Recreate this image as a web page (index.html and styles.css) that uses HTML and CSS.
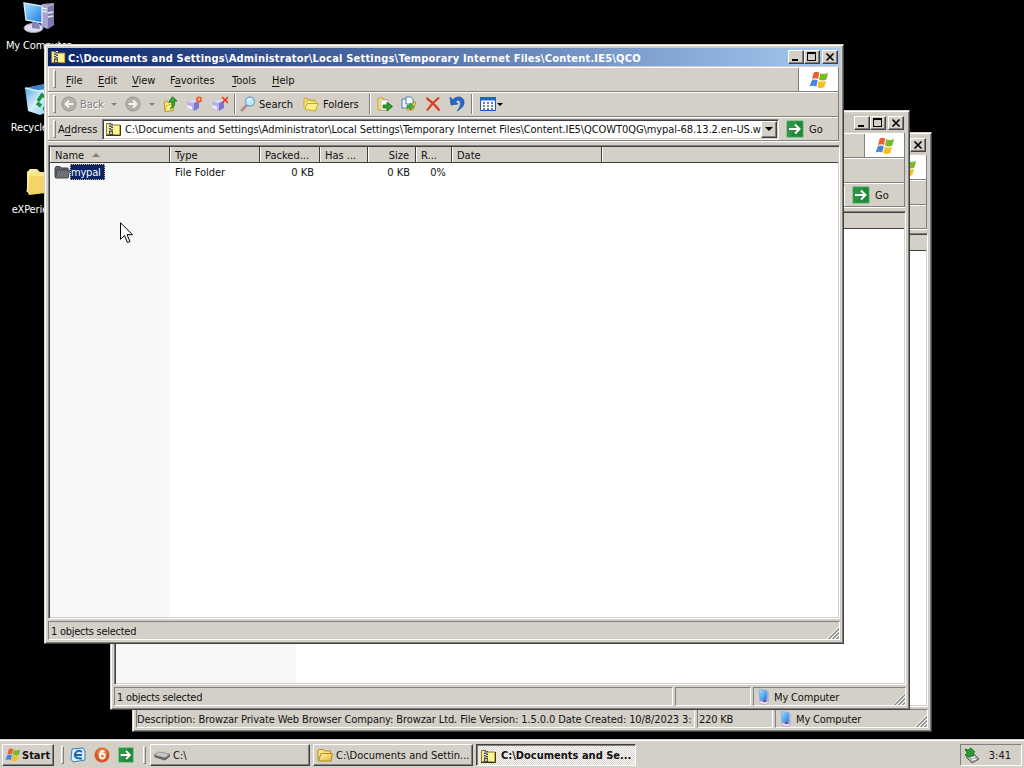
FILE: index.html
```
<!DOCTYPE html>
<html lang="en">
<head>
	<meta charset="UTF-8">
	<title>Desktop</title>
	<link rel="stylesheet" href="styles.css">
</head>
<body>
	<svg class="defs">
		<defs>
			<linearGradient id="gScreen" x1="0" y1="0" x2="1" y2="1">
				<stop offset="0" stop-color="#a8e4ff"/><stop offset="1" stop-color="#1c78e0"/>
			</linearGradient>
			<linearGradient id="gFolder" x1="0" y1="0" x2="1" y2="1">
				<stop offset="0" stop-color="#fff6a8"/><stop offset="1" stop-color="#e4b83c"/>
			</linearGradient>
			<linearGradient id="gBin" x1="0" y1="0" x2="1" y2="1">
				<stop offset="0" stop-color="#4a9ee0"/><stop offset="0.5" stop-color="#d4f0fc"/><stop offset="1" stop-color="#7cc0ec"/>
			</linearGradient>
			<symbol id="zip" viewBox="0 0 16 16">
				<path d="M1.500 13.500v-11h4l1.500 1.500h8v10z" fill="#f4ec90" stroke="#8c7c28"/>
				<path d="M8 5h6v8H8z" fill="#fcf48c"/>
				<path d="M15.500 4v10.500H1" fill="none" stroke="#3c3410"/>
				<path d="M4 2h4v12H4z" fill="#e8e8d8"/>
				<path d="M5 2v12M7 3v11" stroke="#222" stroke-width="1.500" stroke-dasharray="1.500 1" fill="none"/>
				<path d="M4.500 10.500h3v3h-3z" fill="#ccc" stroke="#333" stroke-width=".8"/>
			</symbol>
			<symbol id="folder" viewBox="0 0 16 16">
				<path d="M1 13.500V4l1-1.500h4L7.500 4H13.500v4" fill="#f8e888" stroke="#b48a18"/>
				<path d="M4 6.500h11.500l-1.500 7.500H1.500z" fill="url(#gFolder)" stroke="#b48a18"/>
			</symbol>
			<symbol id="flag" viewBox="0 0 20 18">
				<path d="M4.500 2Q7-.2 10.300 1.800L9 8Q6 6.400 3 8.400z" fill="#e8602c"/>
				<path d="M11.300 2.300Q14.500 4 19.200 2L17.400 8.600Q13.500 10.500 10 8.500z" fill="#7ab82c"/>
				<path d="M2.700 9.400Q5.800 7.500 8.700 9.200L7.300 15.400Q4 13.800.6 15.600z" fill="#4884dc"/>
				<path d="M9.700 9.700Q13 11.500 17 9.700L15.400 16Q11.500 18.300 8.300 16z" fill="#f4c020"/>
			</symbol>
			<symbol id="go" viewBox="0 0 18 18">
				<rect x=".5" y=".5" width="17" height="17" rx="1.500" fill="#2c9444" stroke="#8cc890"/>
				<path d="M11 2h5v14H5z" fill="#14782c" opacity=".45"/>
				<path d="M3 9h10M9 4.500L13.500 9 9 13.500" fill="none" stroke="#fff" stroke-width="2"/>
			</symbol>
			<symbol id="pc" viewBox="0 0 16 16">
				<path d="M10 3h3v9l-3 2z" fill="#b8b4d8"/>
				<path d="M3 0.500l8 1v9l-7 1z" fill="url(#gScreen)" stroke="#78a8d8" stroke-width=".7"/>
				<ellipse cx="8" cy="13.500" rx="4.500" ry="2" fill="#e4dcec" stroke="#9a90b0" stroke-width=".6"/>
				<path d="M7 11l3-.5.500 2.500h-4z" fill="#6050a0"/>
			</symbol>
			<symbol id="send" viewBox="0 0 16 16">
				<path d="M0 6l6-2.500 6 1.500v7l-5 3-6-3z" fill="#b4b0e8"/>
				<path d="M1 5.500l6-2 5 1.500-6 2z" fill="#dcdcf8"/>
				<path d="M7 7l5-2v7l-5 3z" fill="#7c78cc"/>
				<path d="M0 9l5 1.500v3L1 12z" fill="#f4f0ff"/>
			</symbol>
			<symbol id="grip" viewBox="0 0 13 13">
				<path d="M1 13L13 1M5 13l8-8M9 13l4-4" stroke="#fff" fill="none"/>
				<path d="M2 13L13 2M3 13L13 3M6 13l7-7M7 13l6-6M10 13l3-3M11 13l2-2" stroke="#808080" stroke-width=".8" fill="none"/>
			</symbol>
			<symbol id="min" viewBox="0 0 12 10"><path d="M2 7h6v2H2z"/></symbol>
			<symbol id="max" viewBox="0 0 12 10"><path d="M1 0h9v9H1zM2 2v6h7V2z" fill-rule="evenodd"/></symbol>
			<symbol id="close" viewBox="0 0 12 10"><path d="M2.500 1.500l7 7M9.500 1.500l-7 7" fill="none" stroke="#000" stroke-width="1.700"/></symbol>
		</defs>
	</svg>

	<div class="desktop">
		<ul class="icons">
			<li>
				<svg viewBox="0 0 32 32">
					<path d="M19 2l12-1v22l-7 4-6-3z" fill="#a8a4cc"/><path d="M25 5l6-2v20l-6 4z" fill="#7c78b0"/>
					<path d="M19 6l5 1M19 9l5 1M25 11l5-1M25 15l5-1" stroke="#e8e8fc" stroke-width="1.500"/>
					<ellipse cx="10.500" cy="26" rx="9.500" ry="4.500" fill="#dcdcf0" stroke="#9c9cc0"/><path d="M9 20l7 1 1 6-8-1z" fill="#8884b4"/>
					<path d="M1 1l18 3v17L3 18z" fill="url(#gScreen)" stroke="#d8e8f8" stroke-width="1.400"/>
				</svg>
				<span>My Computer</span>
			</li>
			<li>
				<svg viewBox="0 0 32 32">
					<path d="M2 4l20-4 8 5-3 22-10 4-12-4z" fill="url(#gBin)"/><path d="M2 4l13 3 15-2-8-5z" fill="#3c84cc"/>
					<path d="M2 4l13 3 15-2" fill="none" stroke="#d8f4ff" stroke-width="1.500"/>
					<path d="M15 17l4-6 5 3M25 17l1 7-6 1M18 22l-4-3" fill="none" stroke="#189438" stroke-width="3.500"/>
				</svg>
				<span>Recycle Bin</span>
			</li>
			<li>
				<svg viewBox="0 0 32 32">
					<path d="M4 25V6l3-3h7l3 3h14v20L6 29z" fill="url(#gFolder)"/><path d="M6 8l25 1v18L4 26z" fill="#f4d468"/><path d="M4 26l2-17h25" fill="none" stroke="#fff4b0"/>
				</svg>
				<span>eXPerience</span>
			</li>
		</ul>

		<div class="window w3">
			<div class="title">
				<span class="caption"></span>
				<span class="btn"><svg><use href="#min"/></svg></span><span class="btn"><svg><use href="#max"/></svg></span><span class="btn x"><svg><use href="#close"/></svg></span>
			</div>
			<div class="bars">
				<div class="menu"><span class="fill"></span><div class="brand"><svg><use href="#flag"/></svg></div></div>
				<div class="tools"></div>
				<div class="address"></div>
			</div>
			<div class="list"><div class="head"></div></div>
			<div class="status">
				<span class="desc">Description: Browzar Private Web Browser Company: Browzar Ltd. File Version: 1.5.0.0 Date Created: 10/8/2023 3:</span>
				<span class="size">220 KB</span>
				<span class="zone"><svg><use href="#pc"/></svg><b>My Computer</b></span>
				<svg class="grip"><use href="#grip"/></svg>
			</div>
		</div>

		<div class="window w2">
			<div class="title">
				<span class="caption"></span>
				<span class="btn"><svg><use href="#min"/></svg></span><span class="btn"><svg><use href="#max"/></svg></span><span class="btn x"><svg><use href="#close"/></svg></span>
			</div>
			<div class="bars">
				<div class="menu"><span class="fill"></span><div class="brand"><svg><use href="#flag"/></svg></div></div>
				<div class="tools"></div>
				<div class="address">
					<div class="combo"></div>
					<div class="go"><svg><use href="#go"/></svg>Go</div>
				</div>
			</div>
			<div class="list"><div class="head"></div><div class="body"><div class="sorted"></div></div></div>
			<div class="status">
				<span class="desc sel">1 objects selected</span>
				<span class="size"></span>
				<span class="zone"><svg><use href="#pc"/></svg><b>My Computer</b></span>
				<svg class="grip"><use href="#grip"/></svg>
			</div>
		</div>

		<div class="window w1">
			<div class="title active">
				<svg class="ico"><use href="#zip"/></svg>
				<span class="caption">C:\Documents and Settings\Administrator\Local Settings\Temporary Internet Files\Content.IE5\QCO</span>
				<span class="btn"><svg><use href="#min"/></svg></span><span class="btn"><svg><use href="#max"/></svg></span><span class="btn x"><svg><use href="#close"/></svg></span>
			</div>
			<div class="bars">
				<div class="menu">
					<i class="handle"></i>
					<span class="m-file"><u>F</u>ile</span>
					<span class="m-edit"><u>E</u>dit</span>
					<span class="m-view"><u>V</u>iew</span>
					<span class="m-fav">F<u>a</u>vorites</span>
					<span class="m-tools"><u>T</u>ools</span>
					<span class="fill"><u>H</u>elp</span>
					<div class="brand"><svg><use href="#flag"/></svg></div>
				</div>
				<div class="tools">
					<i class="handle"></i>
					<div class="back off">
						<svg viewBox="0 0 16 16"><circle cx="8" cy="8" r="7" fill="#b4b0a8" stroke="#98948c"/><path d="M12.500 8H5M8 4.500L4.500 8 8 11.500" fill="none" stroke="#f4f2ee" stroke-width="2"/></svg>
						<span>Back</span><i class="drop"></i>
					</div>
					<div class="fwd off">
						<svg viewBox="0 0 16 16"><circle cx="8" cy="8" r="7" fill="#b4b0a8" stroke="#98948c"/><path d="M3.500 8H11M8 4.500L11.500 8 8 11.500" fill="none" stroke="#f4f2ee" stroke-width="2"/></svg>
						<i class="drop"></i>
					</div>
					<svg class="up" viewBox="0 0 16 16"><path d="M3 15.500L2 6l3.500-1 1 1.500 4-1 1 9z" fill="#f4e478" stroke="#bc981c"/><path d="M3 15.500l2-6 7.500-2-1.500 6.500z" fill="#fcf4a0" stroke="#bc981c" stroke-width=".7"/><path d="M8 13q3-2 2-7H7L10.500.8 15 5H12.500q1 6-4.500 8z" fill="#34b02c" stroke="#146c14" stroke-width=".8"/></svg>
					<svg class="mapd" viewBox="0 0 16 16"><use href="#send"/><circle cx="12" cy="3.500" r="2.200" fill="#f8b870" stroke="#e8542c" stroke-width="1.500"/></svg>
					<svg class="unmap" viewBox="0 0 16 16"><use href="#send"/><path d="M10 1l6 6M16 1l-6 6" stroke="#e83c24" stroke-width="1.700"/></svg>
					<i class="sep s1"></i>
					<svg class="find" viewBox="0 0 16 16"><path d="M1 15l6-6" stroke="#b08890" stroke-width="2.500"/><circle cx="10" cy="5.500" r="4.500" fill="#bcecfc" stroke="#78a8c4" stroke-width="1.300"/><path d="M7.500 5q1-2.500 3.500-2" stroke="#fff" fill="none" stroke-width="1.300"/></svg>
					<span class="t-search">Search</span>
					<svg class="dirs" viewBox="0 0 16 16"><path d="M1 12V2.500h4l1 1.500h5.500V6" fill="#f8e87c" stroke="#c8a830"/><path d="M3.500 6V4.500L7 4l1 1h5v2" fill="#fcf4a0" stroke="#c8a830"/><path d="M4 7.500h11L12.500 15 2 13.500z" fill="#fcf08c" stroke="#c8a830"/></svg>
					<span class="t-folders">Folders</span>
					<i class="sep s2"></i>
					<svg class="mv" viewBox="0 0 16 16"><path d="M1 2h5l1 2h4v10H1z" fill="#f8e474" stroke="#c8a428"/><path d="M4 4h6l2 2v8H4z" fill="#fff" stroke="#a8b0b8" stroke-width=".7"/><path d="M6 9h4V6l5.500 4.500L10 15v-3H6z" fill="#2ca02c" stroke="#146c1c" stroke-width=".8"/></svg>
					<svg class="cp" viewBox="0 0 16 16"><path d="M7 6h8l-3 8H6z" fill="#f4dc58" stroke="#b89820"/><path d="M1 3h6l2 2v7H1z" fill="#e4f4ff" stroke="#5080a8"/><path d="M5 1h5l2 2v5H5z" fill="#fff" stroke="#5080a8"/><path d="M6 9.500h3V7l4 3.500L9 14v-2.500H6z" fill="#48b840" stroke="#207820" stroke-width=".7"/></svg>
					<svg class="del" viewBox="0 0 16 16"><path d="M1.500 2q7 5 13 12.500M14 1.500Q7 7 2 14.500" fill="none" stroke="#dc3c1c" stroke-width="2.200"/></svg>
					<svg class="undo" viewBox="0 0 16 16"><path d="M1 1l1 8 7-1-2.500-2Q9 2.800 11 5q2 4-3 10 8-4 7-10Q13-.5 7 1.500 5 2.300 3.800 3.800z" fill="#2468c8" stroke="#104898" stroke-width=".6"/></svg>
					<i class="sep s3"></i>
					<svg class="views" viewBox="0 0 16 14"><path d="M.5.5h15v13H.5z" fill="#fff" stroke="#1858b0"/><path d="M0 0h16v3.500H0z" fill="#1c64cc"/><path d="M3 6h11M3 9h11M3 12h11" stroke="#306090" stroke-width="1.500" stroke-dasharray="2 2"/></svg>
					<i class="drop dark"></i>
				</div>
				<div class="address">
					<i class="handle"></i>
					<span class="a-label">A<u>d</u>dress</span>
					<div class="combo">
						<svg><use href="#zip"/></svg>
						<span class="path">C:\Documents and Settings\Administrator\Local Settings\Temporary Internet Files\Content.IE5\QCOWT0QG\mypal-68.13.2.en-US.w</span>
						<span class="pick"><i class="drop dark"></i></span>
					</div>
					<div class="go"><svg><use href="#go"/></svg>Go</div>
				</div>
			</div>
			<div class="list">
				<div class="head row">
					<span>Name<i class="asc"></i></span><span>Type</span><span>Packed...</span><span>Has ...</span><span class="num">Size</span><span>R...</span><span>Date</span><span></span>
				</div>
				<div class="body">
					<div class="sorted"></div>
					<div class="row item">
						<span><svg viewBox="0 0 16 16"><path d="M1 13V4l1-1.500h4L7.500 4H14v9.500z" fill="#606468" stroke="#404448"/><path d="M3 6h12.500L14 14H1.500z" fill="#74787c" stroke="#44484c"/><path d="M4 8h10M3.500 10h10M3 12h10" stroke="#54585c" stroke-dasharray="1 1"/></svg><em>mypal</em></span><span>File Folder</span><span class="num">0 KB</span><span></span><span class="num">0 KB</span><span class="num">0%</span><span></span><span></span>
					</div>
				</div>
			</div>
			<div class="status">
				<span class="desc sel">1 objects selected</span>
				<svg class="grip"><use href="#grip"/></svg>
			</div>
		</div>

		<svg class="cursor" viewBox="0 0 13 22"><path d="M.5.800v16.500l4-3.800 3 7 2.500-1-3-6.800h5.500z" fill="#fff" stroke="#000"/></svg>
	</div>

	<div class="taskbar">
		<div class="start"><svg><use href="#flag"/></svg>Start</div>
		<i class="handle"></i>
		<div class="quick">
			<svg viewBox="0 0 16 16"><path d="M2 2l11-1 2 3v9l-12 2-2-3z" fill="#d8f0fc" stroke="#3880b8"/><path d="M12 5Q7 2 5 7q-1 5 7 4.500M5 8h7" fill="none" stroke="#1c68b4" stroke-width="2"/></svg>
			<svg viewBox="0 0 16 16"><circle cx="8" cy="8" r="7.500" fill="#d85424"/><circle cx="8" cy="6" r="5" fill="#ec7c40"/><path d="M10.500 4.500Q6 2.500 6 9" fill="none" stroke="#fff" stroke-width="1.800"/><circle cx="8.300" cy="9" r="2.500" fill="none" stroke="#fff" stroke-width="1.800"/></svg>
			<svg viewBox="0 0 18 18"><use href="#go"/></svg>
		</div>
		<i class="handle h2"></i>
		<div class="tasks">
			<div class="task"><svg viewBox="0 0 16 16"><path d="M0 8l5-3 11 2-5 4z" fill="#c8c8c8" stroke="#808080" stroke-width=".7"/><path d="M0 8l11 3v2.500L1 10.500zM11 11l5-4v2.500l-5 4z" fill="#686868"/></svg><span>C:\</span></div>
			<div class="task"><svg><use href="#folder"/></svg><span>C:\Documents and Settin...</span></div>
			<div class="task on"><svg><use href="#zip"/></svg><span>C:\Documents and Se...</span></div>
		</div>
		<div class="tray">
			<svg viewBox="0 0 16 16"><path d="M3 10l8-3 5 5-7 4z" fill="#a8acac" stroke="#585c5c"/><path d="M8 11l4-1M9 13l4-1" stroke="#fff"/><path d="M2 2l3 1 3-2 4 4-2 1 1 2-5 2-4-2 2-2z" fill="#28a030" stroke="#107018" stroke-width=".8"/></svg>
			<span>3:41</span>
		</div>
	</div>
</body>
</html>
```
FILE: styles.css
```
*{
	margin: 0;
	padding: 0;
	box-sizing: border-box;
}
body{
	width: 1024px;
	height: 768px;
	overflow: hidden;
	background: #000;
	font: 11px/13px "DejaVu Sans Condensed", "DejaVu Sans", sans-serif;
	font-stretch: condensed;
	color: #111;
	white-space: nowrap;
	display: flex;
	flex-direction: column;
}
ul{
	list-style: none;
}
i, em{
	font-style: normal;
}
i{
	display: block;
	flex: none;
}
b{
	font-weight: normal;
}
svg{
	display: block;
	flex: none;
	width: 16px;
	height: 16px;
}
u{
	text-underline-offset: 2px;
	text-decoration-thickness: 1px;
}
.defs{
	position: absolute;
	width: 0;
	height: 0;
}
.desktop{
	position: relative;
	height: 739px;
	overflow: hidden;
}
/* desktop icons */
.icons{
	width: 77px;
	padding-top: 2px;
	color: #fff;
	letter-spacing: -0.15px;
}
.icons li{
	height: 82px;
	display: flex;
	flex-direction: column;
	align-items: center;
	gap: 5px;
}
.icons svg{
	width: 32px;
	height: 32px;
}
/* windows */
.window{
	position: absolute;
	width: 800px;
	height: 600px;
	padding: 3px;
	display: flex;
	flex-direction: column;
	background: #d4d0c8;
	border: 1px solid;
	border-color: #d4d0c8 #404040 #404040 #d4d0c8;
	box-shadow: inset 1px 1px #fff, inset -1px -1px #808080;
}
.w1{
	left: 44px;
	top: 44px;
}
.w2{
	left: 110px;
	top: 110px;
}
.w3{
	left: 132px;
	top: 132px;
}
.title{
	height: 18px;
	display: flex;
	align-items: center;
	background: linear-gradient(90deg, #808080, #d0ccc4);
	padding: 0 2px;
}
.title.active{
	background: linear-gradient(90deg, #0a246a, #a6caf0);
}
.caption{
	flex: 1;
	color: #fff;
	font-weight: bold;
	letter-spacing: 0.2px;
	padding: 2px 0 0 2px;
}
.btn{
	width: 16px;
	height: 14px;
	background: #d4d0c8;
	border: 1px solid;
	border-color: #fff #404040 #404040 #fff;
	box-shadow: inset -1px -1px #808080;
	padding: 1px;
}
.btn svg{
	width: 12px;
	height: 10px;
}
.x{
	margin-left: 2px;
}
.bars{
	height: 79px;
	display: flex;
	flex-direction: column;
	padding-top: 1px;
}
.menu, .tools, .address{
	display: flex;
	align-items: center;
	border: 1px solid #808080;
	border-width: 0 1px 1px 0;
	box-shadow: inset 1px 1px #fff;
	margin-right: 1px;
	padding-left: 5px;
}
.menu{
	height: 25px;
}
.menu span{
	padding-top: 3px;
}
.tools{
	height: 25px;
}
.tools span{
	padding-top: 1px;
}
.address{
	height: 24px;
	padding-top: 1px;
	margin-bottom: 1px;
	box-shadow: inset 1px 1px #fff, 0 1px #fff;
}
.handle{
	width: 3px;
	height: 18px;
	border: 1px solid;
	border-color: #fff #808080 #808080 #fff;
	margin-right: 10px;
}
.fill{
	flex: 1;
}
.m-file{ width: 32px; }
.m-edit{ width: 34px; }
.m-view{ width: 38px; }
.m-fav{ width: 62px; }
.m-tools{ width: 40px; }
.brand{
	width: 40px;
	height: 23px;
	margin-top: 1px;
	background: #fff;
	border-left: 1px solid #808080;
	display: flex;
	align-items: center;
	justify-content: center;
}
.brand svg{
	width: 20px;
	height: 18px;
}
/* toolbar */
.tools .handle{
	margin-right: 5px;
}
.back, .fwd{
	display: flex;
	align-items: center;
}
.off{
	color: #808080;
	text-shadow: 1px 1px #fff;
}
.back{
	width: 64px;
}
.back span{
	width: 31px;
	margin-left: 3px;
}
.fwd{
	width: 37px;
}
.fwd .drop{
	margin-left: 8px;
}
.drop{
	width: 0;
	height: 0;
	border: 3px solid transparent;
	border-top-color: #808080;
	border-bottom: 0;
}
.dark{
	border-top-color: #000;
}
.mapd{ margin-left: 9px; }
.unmap{ margin-left: 9px; }
.sep{
	width: 2px;
	height: 20px;
	border-left: 1px solid #808080;
	border-right: 1px solid #fff;
}
.s1{ margin: 0 4px 0 6px; }
.find{ margin-right: 3px; }
.t-search{ width: 44px; }
.t-folders{ width: 46px; margin-left: 4px; }
.s2{ margin-right: 6px; }
.cp, .del, .undo{ margin-left: 8px; }
.s3{ margin: 0 7px 0 6px; }
.views{ height: 14px; margin-right: 1px; }
/* address bar */
.address .handle{
	margin-right: 2px;
}
.a-label{
	width: 44px;
}
.combo{
	width: 677px;
	height: 21px;
	display: flex;
	align-items: center;
	background: #fff;
	border: 1px solid;
	border-color: #808080 #fff #fff #808080;
	box-shadow: inset 1px 1px #404040, inset -1px -1px #d4d0c8;
	padding: 0 1px 0 2px;
}
.w2 .combo{
	margin-left: 49px;
}
.path{
	flex: 1;
	width: 0;
	overflow: hidden;
	padding: 1px 0 0 4px;
	letter-spacing: -0.08px;
}
.pick{
	width: 16px;
	height: 17px;
	background: #d4d0c8;
	border: 1px solid;
	border-color: #fff #404040 #404040 #fff;
	box-shadow: inset -1px -1px #808080;
	display: flex;
	align-items: center;
	justify-content: center;
}
.pick .dark{
	border-width: 4px 4px 0;
}
.go{
	display: flex;
	align-items: center;
	gap: 5px;
	margin-left: 7px;
}
.go svg{
	width: 18px;
	height: 18px;
}
/* file list */
.list{
	height: 474px;
	border: 1px solid;
	border-color: #808080 #fff #fff #808080;
	box-shadow: inset 1px 1px #404040, inset -1px -1px #d4d0c8;
	padding: 1px;
	background: #fff;
}
.head{
	height: 16px;
	background: #d4d0c8;
	border-bottom: 1px solid #404040;
}
.row{
	display: grid;
	grid-template-columns: 120px 90px 60px 48px 48px 36px 150px 1fr;
}
.row span{
	padding: 0 5px;
	overflow: hidden;
}
.row .num{
	text-align: right;
	padding-right: 6px;
}
.head span{
	height: 15px;
	line-height: 17px;
	border-right: 1px solid #404040;
	box-shadow: inset 1px 0 #fff;
	display: block;
}
.head span:last-child{
	border-right: 0;
}
.asc{
	display: inline-block;
	border: 4px solid transparent;
	border-bottom-color: #808080;
	border-top: 0;
	margin: 0 0 2px 8px;
}
.body{
	height: 454px;
	position: relative;
}
.sorted{
	position: absolute;
	left: 0;
	top: 0;
	width: 120px;
	height: 100%;
	background: #f7f7f7;
}
.w2 .sorted{
	width: 180px;
}
.item{
	position: relative;
	padding-top: 1px;
	line-height: 17px;
}
.item span:first-child{
	display: flex;
	padding-left: 4px;
}
.item em{
	height: 16px;
	width: 35px;
	background: #0a246a;
	color: #fff;
	outline: 1px dotted #d8b060;
	outline-offset: -1px;
	padding-left: 1px;
	letter-spacing: -0.2px;
}
/* status bar */
.status{
	height: 19px;
	margin-top: 2px;
	display: flex;
	gap: 2px;
	position: relative;
}
.status span{
	border: 1px solid;
	border-color: #808080 #fff #fff #808080;
	padding: 3px 0 0 1px;
	overflow: hidden;
	display: flex;
}
.status .desc{
	width: 559px;
	letter-spacing: -0.1px;
	padding-left: 0;
}
.status .sel{
	letter-spacing: -0.27px;
	padding-left: 2px;
}
.size{
	width: 76px;
	letter-spacing: -0.2px;
}
.zone{
	flex: 1;
	letter-spacing: -0.15px;
}
.zone svg{
	margin: -2px 2px 0 1px;
}
.w1 .desc{
	flex: 1;
}
.status .grip{
	position: absolute;
	right: 1px;
	bottom: 1px;
	width: 13px;
	height: 13px;
}
.cursor{
	position: absolute;
	left: 120px;
	top: 222px;
	width: 13px;
	height: 22px;
}
/* taskbar */
.taskbar{
	height: 29px;
	background: #d4d0c8;
	border-top: 1px solid #d4d0c8;
	box-shadow: inset 0 1px #fff;
	padding: 4px 2px 2px;
	display: flex;
	align-items: center;
}
.start, .task{
	height: 22px;
	display: flex;
	align-items: center;
	border: 1px solid;
	border-color: #fff #404040 #404040 #fff;
	box-shadow: inset -1px -1px #808080;
}
.start{
	width: 52px;
	font-weight: bold;
	padding-left: 2px;
	gap: 1px;
	margin-right: 7px;
}
.taskbar .handle{
	margin: 0;
}
.quick{
	display: flex;
	gap: 8px;
	margin: 0 9px 0 6px;
}
.tasks{
	flex: 1;
	display: flex;
	gap: 3px;
	margin-left: 4px;
}
.task{
	width: 160px;
	padding-left: 3px;
	gap: 3px;
}
.on{
	font-weight: bold;
	background: repeating-conic-gradient(#fff 0 25%, #d4d0c8 0 50%) 0 0 / 2px 2px;
	border-color: #404040 #fff #fff #404040;
	box-shadow: inset 1px 1px #808080;
	padding-top: 1px;
	gap: 5px;
}
.tray{
	width: 62px;
	height: 22px;
	border: 1px solid;
	border-color: #808080 #fff #fff #808080;
	display: flex;
	align-items: center;
	justify-content: space-between;
	padding: 0 10px 0 2px;
}
```
